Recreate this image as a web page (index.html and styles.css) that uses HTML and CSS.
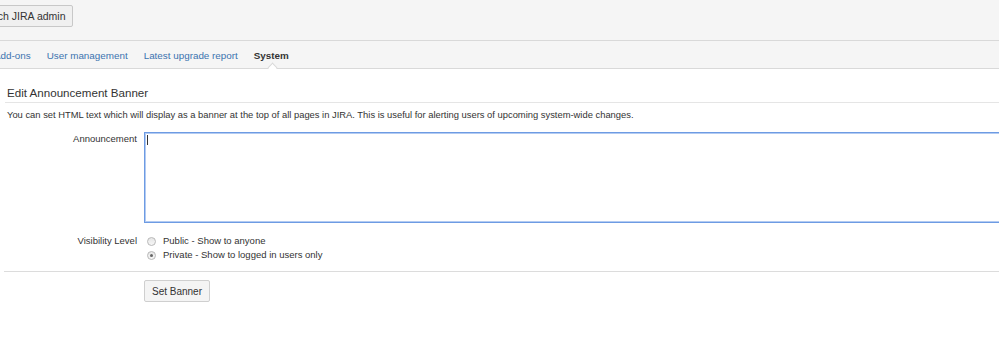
FILE: index.html
```html
<!DOCTYPE html>
<html lang="en">
<head>
    <meta charset="UTF-8">
    <title>Announcement Banner</title>
    <link rel="stylesheet" href="styles.css">
</head>
<body>
    <!-- Верхняя панель администрирования -->
    <div class="admin-bar">
        <button class="switch-btn">Switch JIRA admin</button>
    </div>

    <!-- Вкладки -->
    <div class="tabs">
        <a class="tab" href="#">Add-ons</a>
        <a class="tab" href="#">User management</a>
        <a class="tab" href="#">Latest upgrade report</a>
        <a class="tab active" href="#">System</a>
    </div>

    <div class="content">
        <h2 class="page-title">Edit Announcement Banner</h2>
        <p class="description">You can set HTML text which will display as a banner at the top of all pages in JIRA. This is useful for alerting users of upcoming system-wide changes.</p>

        <form class="banner-form">
            <div class="field-row">
                <label class="field-label" for="announcement">Announcement</label>
                <div class="textarea-wrap">
                    <textarea id="announcement" class="announcement"></textarea>
                    <span class="caret"></span>
                </div>
            </div>

            <div class="field-row visibility">
                <span class="field-label">Visibility Level</span>
                <div class="radio-list">
                    <label class="radio-item"><input type="radio" name="visibility" value="public"> Public - Show to anyone</label>
                    <label class="radio-item"><input type="radio" name="visibility" value="private" checked> Private - Show to logged in users only</label>
                </div>
            </div>

            <div class="buttons-row">
                <button type="button" class="submit-btn">Set Banner</button>
            </div>
        </form>
    </div>
</body>
</html>
```

FILE: styles.css
```css
/* Основной стиль страницы */
body {
    font-family: 'Liberation Sans', Arial, sans-serif;
    font-size: 9.5px;
    color: #333;
    background-color: #fff;
    margin: 0;
    overflow: hidden;
}

/* Верхняя панель */
.admin-bar {
    background-color: #f5f5f5;
    height: 41px;
    border-bottom: 1px solid #d9d9d9;
    box-sizing: border-box;
    padding-top: 5px;
}

.switch-btn {
    font-family: inherit;
    font-size: 10.5px;
    color: #333;
    background-color: #f0f0f0;
    border: 1px solid #c8c8c8;
    border-radius: 2px;
    height: 22px;
    padding: 0 6px;
    margin-left: -29px;
}

/* Вкладки */
.tabs {
    display: flex;
    gap: 16px;
    background-color: #f5f5f5;
    height: 28px;
    border-bottom: 1px solid #d9d9d9;
    box-sizing: border-box;
    align-items: center;
    margin-left: -6px;
    padding-top: 1px;
}

.tab {
    color: #3b73af;
    text-decoration: none;
    font-size: 9.85px;
    position: relative;
}

.tab.active {
    color: #333;
    font-weight: bold;
}

/* Маленький уголок под активной вкладкой */
.tab.active::after {
    content: '';
    position: absolute;
    left: 15px;
    bottom: -10px;
    width: 6px;
    height: 6px;
    background: #fff;
    border-left: 1px solid #d9d9d9;
    border-top: 1px solid #d9d9d9;
    transform: rotate(45deg);
}

/* Контент */
.content {
    padding-left: 5px;
}

.page-title {
    font-size: 11.6px;
    font-weight: normal;
    color: #333;
    margin: 17px 0 0;
    padding: 0 0 2px 2px;
    border-bottom: 1px solid #e5e5e5;
    line-height: 14px;
}

.description {
    margin: 6px 0 11px 2px;
    font-size: 9.4px;
    line-height: 12px;
}

/* Форма */
.field-row {
    display: grid;
    grid-template-columns: 139px 1fr;
}

.field-label {
    text-align: right;
    padding-right: 7px;
    padding-top: 1px;
    line-height: 12px;
}

.textarea-wrap {
    position: relative;
}

.announcement {
    display: block;
    width: 880px;
    height: 91px;
    box-sizing: border-box;
    border: 1px solid #6d9be3;
    box-shadow: inset 0 0 0 1px #b3cbf2;
    outline: none;
    resize: none;
    margin: 0;
}

/* Курсор в поле */
.caret {
    position: absolute;
    left: 3px;
    top: 3px;
    width: 1px;
    height: 10px;
    background: #333;
}

.visibility {
    margin-top: 11px;
}

.radio-list {
    display: flex;
    flex-direction: column;
    gap: 2px;
    padding: 1px 0 0 3px;
}

.radio-item {
    display: flex;
    align-items: center;
    gap: 7px;
    line-height: 12px;
}

.radio-item input {
    appearance: none;
    width: 9px;
    height: 9px;
    margin: 0;
    border-radius: 50%;
    border: 1px solid #b8b8b8;
    background: linear-gradient(#e6e6e6, #f6f6f6);
    box-sizing: border-box;
    position: relative;
}

.radio-item input:checked::after {
    content: '';
    position: absolute;
    left: 2px;
    top: 2px;
    width: 3px;
    height: 3px;
    border-radius: 50%;
    background: #666;
}

.buttons-row {
    border-top: 1px solid #dcdcdc;
    margin-top: 10px;
    margin-left: -1px;
    padding: 8px 0 0 140px;
}

.submit-btn {
    font-family: inherit;
    font-size: 10px;
    color: #333;
    background-color: #f4f4f4;
    border: 1px solid #cfcfcf;
    border-radius: 2px;
    height: 22px;
    width: 66px;
    padding: 0;
}
```
